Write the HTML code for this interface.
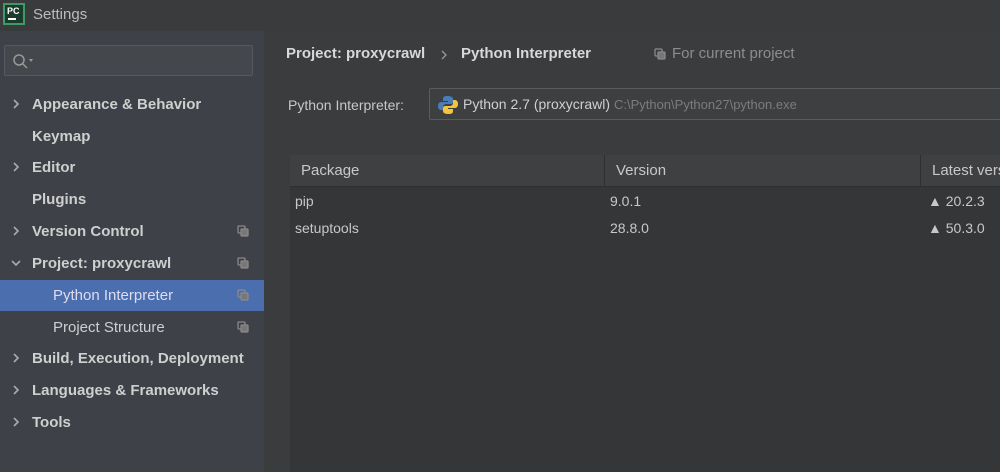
<!DOCTYPE html>
<html><head><meta charset="utf-8"><style>
*{margin:0;padding:0;box-sizing:border-box}
body{width:1000px;height:472px;overflow:hidden;background:#3b3c3e;font-family:"Liberation Sans",sans-serif;color:#c8c8c8;position:relative;white-space:nowrap}
.title{position:absolute;left:0;top:0;width:1000px;height:31px;background:#3a3b3d}
.logo{position:absolute;left:3px;top:3px;width:22px;height:22px;background:#1d3b2c;border:2px solid #3f9a6a}
.logo span{position:absolute;left:2px;top:1px;font-size:9px;font-weight:bold;color:#fff}
.logo i{position:absolute;left:3px;top:13px;width:8px;height:2px;background:#fff}
.title .t{position:absolute;left:33px;top:6px;font-size:15px;color:#bcbcbc}
.side{position:absolute;left:0;top:31px;width:264px;height:441px;background:#3e4148}
.search{position:absolute;left:4px;top:14px;width:249px;height:31px;border:1px solid #555a5e;border-radius:2px;background:#44474c}
.item{position:absolute;left:0;width:264px;height:31px;font-size:15px;font-weight:bold;color:#cfcfcf;line-height:31px}
.item svg.a{position:absolute;left:10px;top:9px}
.item .l{position:absolute;left:32px}
.item.sub .l{left:53px;font-weight:normal}
.cp{position:absolute;left:237px;top:9px}
.sel{background:#4b6eaf}
.bc{position:absolute;top:14px;font-size:15px;font-weight:bold;color:#d8d8d8}
.tbl{position:absolute;left:290px;top:155px;width:710px;height:317px;background:#353637}
.hd{position:absolute;left:0;top:0;width:710px;height:32px;background:#3f4042;border-bottom:1px solid #2e2f30;font-size:15px;line-height:32px}
.hd span{position:absolute}
.sep{position:absolute;top:0;width:1px;height:32px;background:#2e2f30}
.row{position:absolute;left:0;width:710px;height:27px;font-size:14px;line-height:27px}
.row span{position:absolute}
</style></head><body>
<svg width="0" height="0" style="position:absolute"><defs>
<symbol id="chv" viewBox="0 0 12 12"><path d="M4 2l4 4-4 4" fill="none" stroke="#aaa" stroke-width="1.6"/></symbol>
<symbol id="chd" viewBox="0 0 12 12"><path d="M2 4l4 4 4-4" fill="none" stroke="#aaa" stroke-width="1.6"/></symbol>
<symbol id="cpy" viewBox="0 0 12 12"><rect x="1" y="1" width="7" height="7" rx="1" fill="none" stroke="#8a8a8a" stroke-width="1.3"/><rect x="4" y="4" width="7" height="7" rx="1" fill="#777" stroke="#8a8a8a" stroke-width="1.3"/></symbol>
</defs></svg>
<div class="title"><div class="logo"><span>PC</span><i></i></div><div class="t">Settings</div></div>
<div class="side">
 <div class="search"><svg width="30" height="29" style="position:absolute;left:4px;top:0"><circle cx="10" cy="14" r="5" fill="none" stroke="#999" stroke-width="1.5"/><line x1="14" y1="18" x2="18" y2="22" stroke="#999" stroke-width="1.5"/><path d="M20 13l4 0l-2 3z" fill="#999"/></svg></div>
 <div class="item" style="top:58px"><svg class="a" width="12" height="12"><use href="#chv"/></svg><span class="l">Appearance &amp; Behavior</span></div>
 <div class="item" style="top:90px"><span class="l">Keymap</span></div>
 <div class="item" style="top:121px"><svg class="a" width="12" height="12"><use href="#chv"/></svg><span class="l">Editor</span></div>
 <div class="item" style="top:153px"><span class="l">Plugins</span></div>
 <div class="item" style="top:185px"><svg class="a" width="12" height="12"><use href="#chv"/></svg><span class="l">Version Control</span><svg class="cp" width="12" height="12"><use href="#cpy"/></svg></div>
 <div class="item" style="top:217px"><svg class="a" width="12" height="12"><use href="#chd"/></svg><span class="l">Project: proxycrawl</span><svg class="cp" width="12" height="12"><use href="#cpy"/></svg></div>
 <div class="item sub sel" style="top:249px"><span class="l" style="color:#dde">Python Interpreter</span><svg class="cp" width="12" height="12"><use href="#cpy"/></svg></div>
 <div class="item sub" style="top:281px"><span class="l">Project Structure</span><svg class="cp" width="12" height="12"><use href="#cpy"/></svg></div>
 <div class="item" style="top:312px"><svg class="a" width="12" height="12"><use href="#chv"/></svg><span class="l">Build, Execution, Deployment</span></div>
 <div class="item" style="top:344px"><svg class="a" width="12" height="12"><use href="#chv"/></svg><span class="l">Languages &amp; Frameworks</span></div>
 <div class="item" style="top:376px"><svg class="a" width="12" height="12"><use href="#chv"/></svg><span class="l">Tools</span></div>
</div>
<div class="bc" style="left:286px;top:45px">Project: proxycrawl</div>
<svg width="10" height="10" style="position:absolute;left:439px;top:50px"><path d="M3 1l4 4-4 4" fill="none" stroke="#999" stroke-width="1.3"/></svg>
<div class="bc" style="left:461px;top:45px">Python Interpreter</div>
<svg width="12" height="12" style="position:absolute;left:654px;top:48px"><use href="#cpy"/></svg>
<div style="position:absolute;left:672px;top:45px;font-size:15px;color:#8d8d8d">For current project</div>
<div style="position:absolute;left:288px;top:97px;font-size:14px;color:#c8c8c8">Python Interpreter:</div>
<div style="position:absolute;left:429px;top:88px;width:580px;height:32px;border:1px solid #5a5c5e;background:#3d3f41;border-radius:2px">
 <svg width="20" height="20" style="position:absolute;left:8px;top:6px"><path d="M9 1c-4 0-4 2-4 3v2h5v1H3c-2 0-3 2-3 4s1 4 3 4h2v-3c0-2 2-3 3-3h5c1 0 2-1 2-2V4c0-2-2-3-6-3z" fill="#4a7db8"/><path d="M11 19c4 0 4-2 4-3v-2h-5v-1h7c2 0 3-2 3-4s-1-4-3-4h-2v3c0 2-2 3-3 3H7c-1 0-2 1-2 2v3c0 2 2 3 6 3z" fill="#f2c53d"/></svg>
 <span style="position:absolute;left:33px;top:7px;font-size:14px;color:#d0d0d0">Python 2.7 (proxycrawl) <span style="color:#7c7c7c;font-size:13px">C:\Python\Python27\python.exe</span></span>
</div>
<div class="tbl">
 <div class="hd"><span style="left:11px">Package</span><span style="left:326px">Version</span><span style="left:642px">Latest version</span><div class="sep" style="left:314px"></div><div class="sep" style="left:630px"></div></div>
 <div class="row" style="top:33px"><span style="left:5px">pip</span><span style="left:320px">9.0.1</span><span style="left:638px">&#x25B2; 20.2.3</span></div>
 <div class="row" style="top:60px"><span style="left:5px">setuptools</span><span style="left:320px">28.8.0</span><span style="left:638px">&#x25B2; 50.3.0</span></div>
</div>
</body></html>
